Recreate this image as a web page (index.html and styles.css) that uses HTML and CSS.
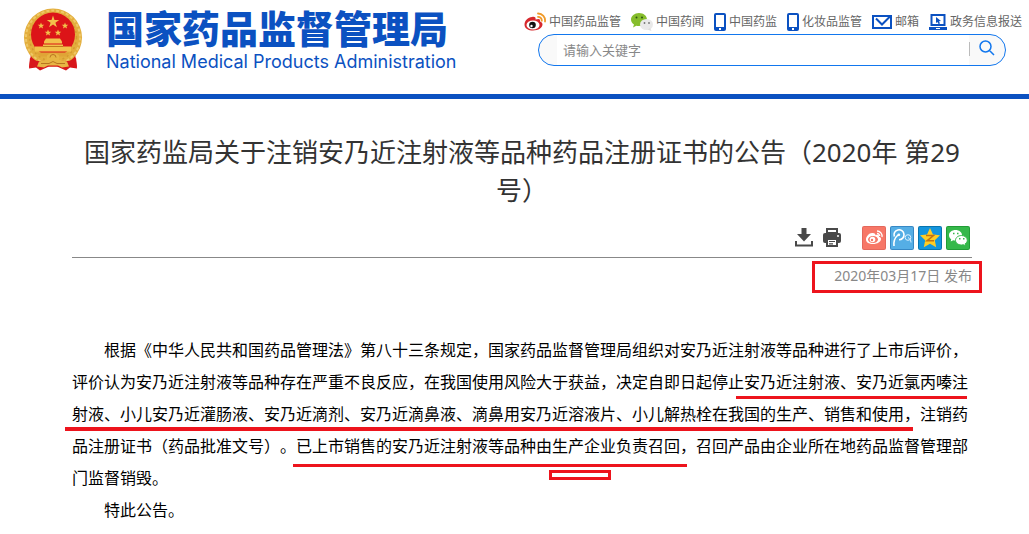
FILE: index.html
```html
<!DOCTYPE html>
<html lang="zh-CN">
<head>
    <meta charset="UTF-8">
    <meta name="viewport" content="width=device-width, initial-scale=1.0">
    <title>国家药品监督管理局</title>
    <link rel="stylesheet" href="styles.css">
</head>
<body>
    <header class="header">
        <a class="logo" href="#">
            <svg class="emblem" viewBox="0 0 60 63" aria-hidden="true">
                <path d="M8 46 L6 61 L13 60 L17 63 L26 59 L34 59 L43 63 L47 60 L54 61 L52 46Z" fill="#d8161b"/>
                <circle cx="30" cy="30" r="29" fill="#e3ae3d"/>
                <circle cx="30" cy="30" r="27" fill="none" stroke="#efc866" stroke-width="2" stroke-dasharray="3 2"/>
                <circle cx="30" cy="30" r="23.500" fill="none" stroke="#d39a30" stroke-width="1.500" stroke-dasharray="2 3"/>
                <circle cx="30" cy="27" r="22" fill="#dc1418"/>
                <g fill="#f2c14b">
                    <path d="M30 8l1.500 4.500h4.700l-3.800 2.800 1.500 4.500-3.900-2.800-3.900 2.800 1.500-4.500-3.800-2.800h4.700z"/>
                    <path d="M18 15l.9 2.200 2.400.1-1.900 1.500.7 2.300-2.100-1.300-2 1.300.6-2.300-1.900-1.500 2.400-.1z"/>
                    <path d="M42 15l.9 2.200 2.400.1-1.900 1.500.7 2.300-2.100-1.300-2 1.300.6-2.300-1.900-1.500 2.400-.1z"/>
                    <path d="M25 22l.9 2.200 2.400.1-1.900 1.500.7 2.300-2.100-1.300-2 1.300.6-2.300-1.900-1.500 2.400-.1z"/>
                    <path d="M35 22l.9 2.200 2.400.1-1.900 1.500.7 2.300-2.100-1.300-2 1.300.6-2.300-1.900-1.500 2.400-.1z"/>
                    <path d="M23 31h14l2 3v2h-18v-2z"/>
                    <path d="M20 37h20v2h8v5H12v-5h8z"/>
                    <path d="M13 45h34l-4 4H17z" fill="#e0a436"/>
                </g>
                <path d="M20 39h20" stroke="#c07a1c" fill="none"/>
                <path d="M7 50c3 4 9 4 15 3h16c6 1 12 1 15-3l1 10-8-1-3-3-7 3H24l-7-3-3 3-8 1z" fill="#d8161b"/>
                <path d="M24 48l3-2h6l3 2v4l8 2 2 5-7 1-4-2H25l-4 2-7-1 2-5 8-2z" fill="#e7b543"/>
                <path d="M27 50a3 3 0 0 1 6 0M18 56h8l4-2 4 2h8" fill="none" stroke="#b97520"/>
            </svg>
            <span class="logo-text">
                <span class="logo-cn">国家药品监督管理局</span>
                <span class="logo-en">National Medical Products Administration</span>
            </span>
        </a>
        <div class="tools">
            <nav class="top-links">
                <a href="#">
                    <svg width="22" height="20" viewBox="0 0 22 20" aria-hidden="true">
                        <path d="M8 5C4 5 .5 9 .5 12.500c0 4 4 6 8.500 6 5.500 0 9.500-3 9.500-6 0-2-1.500-2.600-2.500-3 .6-2-.5-3.500-4.500-2C12 5.500 11 4.500 8 5z" fill="#d7282d"/>
                        <ellipse cx="9" cy="13" rx="6.500" ry="4.500" fill="#fff"/>
                        <circle cx="8.500" cy="13" r="3.300" fill="#111"/>
                        <circle cx="7.500" cy="14" r="1.200" fill="#fff"/>
                        <path d="M14 1.500a7 7 0 0 1 7 8M14 4.800a3.800 3.800 0 0 1 3.800 4" fill="none" stroke="#f09a28" stroke-width="1.800" stroke-linecap="round"/>
                    </svg>
                    中国药品监管
                </a>
                <a href="#">
                    <svg width="22" height="20" viewBox="0 0 22 20" aria-hidden="true">
                        <path d="M8 1C3.500 1 0 4 0 7.500c0 2 1 3.800 3 5L2 15.500l3.300-1.800c1 .3 1.800.3 2.700.3 4.500 0 8-2.900 8-6.500S12.500 1 8 1z" fill="#86bd2c"/>
                        <ellipse cx="15.500" cy="12.500" rx="6.500" ry="5.500" fill="#e9e9e9"/>
                        <path d="M19 16l1.500 3-4-1.500z" fill="#ddd"/>
                        <circle cx="5.500" cy="5.500" r="1" fill="#2c5410"/>
                        <circle cx="11" cy="5.500" r="1" fill="#2c5410"/>
                        <circle cx="13.500" cy="11" r=".9" fill="#777"/>
                        <circle cx="18" cy="11" r=".9" fill="#777"/>
                    </svg>
                    中国药闻
                </a>
                <a href="#">
                    <svg width="12" height="18" viewBox="0 0 12 18" aria-hidden="true">
                        <rect width="12" height="18" rx="2" fill="#0b51c1"/>
                        <path d="M2 2h8v12H2zM5 15h2v2H5z" fill="#fff"/>
                    </svg>
                    中国药监
                </a>
                <a href="#">
                    <svg width="12" height="18" viewBox="0 0 12 18" aria-hidden="true">
                        <rect width="12" height="18" rx="2" fill="#0b51c1"/>
                        <path d="M2 2h8v12H2zM5 15h2v2H5z" fill="#fff"/>
                    </svg>
                    化妆品监管
                </a>
                <a href="#">
                    <svg width="20" height="14" viewBox="0 0 20 14" aria-hidden="true">
                        <path d="M1 1h18v12H1z" fill="#fff" stroke="#0b51c1" stroke-width="2"/>
                        <path d="M4 3.500l6 6 8-8" fill="none" stroke="#0b51c1" stroke-width="2"/>
                    </svg>
                    邮箱
                </a>
                <a href="#">
                    <svg width="18" height="16" viewBox="0 0 18 16" aria-hidden="true">
                        <path d="M2.500 1h13v10h-13z" fill="#fff" stroke="#0b51c1" stroke-width="2"/>
                        <path d="M0 13h18v3H0z" fill="#0b51c1"/>
                        <path d="M7 3l5 4-2 .3 1 2.200-1.500.5-1-2L7 9z" fill="#0b51c1"/>
                        <path d="M7 14.500h4" stroke="#fff"/>
                    </svg>
                    政务信息报送
                </a>
            </nav>
            <form class="search">
                <input type="text" class="search-input" placeholder="请输入关键字" aria-label="请输入关键字">
                <button type="submit" class="search-button" aria-label="搜索">
                    <svg width="16" height="16" viewBox="0 0 16 16" aria-hidden="true">
                        <path d="M10.500 10.500L15 15M12 6.500a5.500 5.500 0 1 1-11 0 5.500 5.500 0 0 1 11 0z" fill="none" stroke="#1277ee" stroke-width="1.500"/>
                    </svg>
                </button>
            </form>
        </div>
    </header>

    <main class="article">
        <h1 class="title">国家药监局关于注销安乃近注射液等品种药品注册证书的公告（2020年 第29号）</h1>
        <div class="actions">
            <button type="button" aria-label="下载">
                <svg width="20" height="20" viewBox="0 0 20 20" aria-hidden="true">
                    <path d="M7.500 0h5v6h4.500l-7 7.500L3 6h4.500z" fill="#494949"/>
                    <path d="M2 13v4.500h16V13" fill="none" stroke="#494949" stroke-width="2"/>
                </svg>
            </button>
            <button type="button" aria-label="打印">
                <svg width="20" height="20" viewBox="0 0 20 20" aria-hidden="true">
                    <path d="M5 1h10v4H5z" fill="#fff" stroke="#494949" stroke-width="2"/>
                    <rect y="5" x="1" width="18" height="10" rx="2" fill="#494949"/>
                    <path d="M5 11h10v7H5z" fill="#fff" stroke="#494949" stroke-width="2"/>
                    <path d="M7 13.500h6M7 15.800h4" stroke="#494949" stroke-width="1.200"/>
                    <circle cx="16" cy="8" r="1" fill="#fff"/>
                </svg>
            </button>
            <span class="share">
                <a href="#" aria-label="新浪微博">
                    <svg width="24" height="24" viewBox="0 0 24 24" aria-hidden="true">
                        <rect width="24" height="24" rx="2" fill="#e4685c"/>
                        <rect x="1" y="1" width="22" height="22" rx="1" fill="#f77767"/>
                        <path d="M10 7c-3 0-6 3.500-6 6.500 0 3 3 4.500 7 4.500 4.500 0 8-2.200 8-5 0-1.500-1-2-2-2.300.4-1.700-1-2.500-3.600-1.500C13.700 7.700 12.500 6.700 10 7z" fill="#fff"/>
                        <ellipse cx="11" cy="13.500" rx="5" ry="3.500" fill="#f77767"/>
                        <circle cx="10.500" cy="13.500" r="2.800" fill="#fff"/>
                        <circle cx="10" cy="14" r="1.200" fill="#f77767"/>
                        <path d="M15 5a5 5 0 0 1 5 6M15 7.500a2.500 2.500 0 0 1 2.700 2.500" fill="none" stroke="#fff" stroke-width="1.300"/>
                    </svg>
                </a>
                <a href="#" aria-label="腾讯微博">
                    <svg width="24" height="24" viewBox="0 0 24 24" aria-hidden="true">
                        <rect width="24" height="24" rx="2" fill="#3688c5"/>
                        <rect x="1" y="1" width="22" height="22" rx="1" fill="#55aee5"/>
                        <path d="M4 20c-.5-4 .5-8 4-11M4.300 10.500a5 5 0 1 1 4.700 3.300" fill="none" stroke="#fff" stroke-width="1.600"/>
                        <circle cx="8.800" cy="8.800" r="1.400" fill="#fff"/>
                        <circle cx="18" cy="11.500" r="2.800" fill="none" stroke="#d8efff"/>
                        <path d="M18 11.500c2 1 3 3 3 5" fill="none" stroke="#d8efff"/>
                    </svg>
                </a>
                <a href="#" aria-label="QQ空间">
                    <svg width="24" height="24" viewBox="0 0 24 24" aria-hidden="true">
                        <rect width="24" height="24" rx="2" fill="#0875ae"/>
                        <rect x="1" y="1" width="22" height="22" rx="1" fill="#1495dd"/>
                        <path d="M12 2l3 6.500 7 .8-5.200 4.900 1.400 7.100-6.200-3.500-6.200 3.500 1.400-7.100L2 9.300l7-.8z" fill="#ffcd24"/>
                        <path d="M8 9.500h7.500L9 14.800h7" fill="none" stroke="#c27312" stroke-width="1.500"/>
                    </svg>
                </a>
                <a href="#" aria-label="微信">
                    <svg width="24" height="24" viewBox="0 0 24 24" aria-hidden="true">
                        <rect width="24" height="24" rx="2" fill="#219c36"/>
                        <rect x="1" y="1" width="22" height="22" rx="1" fill="#35b84a"/>
                        <path d="M9.500 4C6 4 3 6.200 3 9.200c0 1.700.8 3 2.200 4L4.700 15.500l2.500-1.300c.8.2 1.500.3 2.300.3 3.600 0 6.500-2.300 6.500-5.300S13.100 4 9.500 4z" fill="#fff"/>
                        <path d="M15.500 9.500c-3.300 0-6 2.100-6 4.800s2.700 4.700 6 4.700c.7 0 1.300-.1 1.900-.3l2.300 1.300-.6-2.100c1.400-.9 2.200-2.200 2.200-3.600 0-2.700-2.500-4.800-5.800-4.800z" fill="#fff" stroke="#35b84a"/>
                        <path d="M7 6.800h1.500v1.500H7zM11 6.800h1.500v1.500H11zM13 12h1.500v1.500H13zM17 12h1.500v1.500H17z" fill="#35b84a"/>
                    </svg>
                </a>
            </span>
        </div>
        <p class="publish">
            <time datetime="2020-03-17">2020年03月17日</time> 发布
            <span class="mark mark-date"></span>
        </p>
        <div class="content">
            <p>根据《中华人民共和国药品管理法》第八十三条规定，国家药品监督管理局组织对安乃近注射液等品种进行了上市后评价，评价认为安乃近注射液等品种存在严重不良反应，在我国使用风险大于获益，决定自即日起停止安乃近注射液、安乃近氯丙嗪注射液、小儿安乃近灌肠液、安乃近滴剂、安乃近滴鼻液、滴鼻用安乃近溶液片、小儿解热栓在我国的生产、销售和使用，注销药品注册证书（药品批准文号）。已上市销售的安乃近注射液等品种由生产企业负责召回，召回产品由企业所在地药品监督管理部门监督销毁。</p>
            <p>特此公告。</p>
            <span class="mark mark-names"></span>
            <span class="mark mark-scope"></span>
            <span class="mark mark-recall"></span>
            <span class="mark mark-company"></span>
        </div>
    </main>
</body>
</html>
```

FILE: styles.css
```css
* {
    box-sizing: border-box;
}
body {
    margin: 0;
    background-color: #fff;
    color: #000;
    font-family: "Noto Sans", "Noto Sans CJK SC", sans-serif;
    text-spacing-trim: space-all;
}
a {
    color: inherit;
    text-decoration: none;
}
svg {
    display: block;
    flex-shrink: 0;
}
button {
    padding: 0;
    border: 0;
    background: none;
    cursor: pointer;
}

/* header */
.header {
    display: flex;
    justify-content: space-between;
    align-items: flex-start;
    padding: 7px 7px 23px 23px;
    border-bottom: 5px solid #0b51c1;
}
.logo {
    display: flex;
    gap: 23px;
    color: #0b51c1;
}
.emblem {
    width: 60px;
    height: 64px;
}
.logo-text {
    display: flex;
    flex-direction: column;
    gap: 6px;
    white-space: nowrap;
}
.logo-cn {
    font-family: "Noto Sans CJK SC", sans-serif;
    font-size: 38px;
    font-weight: 900;
    line-height: 40px;
}
.logo-en {
    font-family: Inter, "Liberation Sans", sans-serif;
    font-size: 18px;
    line-height: 18px;
}
.tools {
    display: flex;
    flex-direction: column;
    padding-top: 5px;
}
.top-links {
    display: flex;
    gap: 10px;
    height: 20px;
}
.top-links a {
    display: flex;
    align-items: center;
    gap: 3px;
    color: #666;
    font-size: 12px;
    line-height: 20px;
    white-space: nowrap;
}
.search {
    display: flex;
    align-items: center;
    height: 32px;
    margin: 2px 16px 0 14px;
    padding: 0 18px;
    border: 1px solid #1277ee;
    border-radius: 16px;
    background-color: #f9f9f9;
}
.search-input {
    flex: 1;
    min-width: 0;
    height: 30px;
    padding: 0 6px;
    border: 0;
    outline: 0;
    background-color: #fff;
    font-family: inherit;
    font-size: 13px;
}
.search-input::placeholder {
    color: #888;
}
.search-button {
    display: flex;
    justify-content: space-between;
    width: 26px;
    margin-right: -8px;
    padding-bottom: 4px;
}
.search-button::before {
    content: "";
    width: 1px;
    height: 14px;
    margin: 2px 0 0;
    background-color: #bbb;
}

/* article */
.article {
    padding: 34px 57px 0 72px;
}
.title {
    margin: 0;
    color: #333;
    font-size: 26px;
    font-weight: normal;
    line-height: 38px;
    text-align: center;
}
.actions {
    display: flex;
    justify-content: flex-end;
    align-items: center;
    gap: 8px;
    padding: 17px 2px 7px 0;
    border-bottom: 1px solid #888;
}
.share {
    display: flex;
    gap: 4px;
    margin-left: 12px;
}
.publish {
    position: relative;
    margin: 8px 0 48px;
    color: #888;
    font-size: 14px;
    line-height: 20px;
    text-align: right;
}
.content {
    position: relative;
    font-size: 16px;
    line-height: 32px;
}
.content p {
    margin: 0;
    text-indent: 2em;
}

/* red marks over the text */
.mark {
    position: absolute;
    background-color: #ed141d;
}
.mark-date {
    top: -5px;
    right: -10px;
    width: 170px;
    height: 32px;
    border: 3px solid #ed141d;
    background: none;
}
.mark-names {
    top: 62px;
    left: 664px;
    width: 231px;
    height: 3px;
}
.mark-scope {
    top: 93px;
    left: -7px;
    width: 848px;
    height: 4px;
}
.mark-recall {
    top: 130px;
    left: 221px;
    width: 394px;
    height: 3px;
}
.mark-company {
    top: 136px;
    left: 477px;
    width: 62px;
    height: 10px;
    border: 3px solid #ed141d;
    background: none;
}
```
